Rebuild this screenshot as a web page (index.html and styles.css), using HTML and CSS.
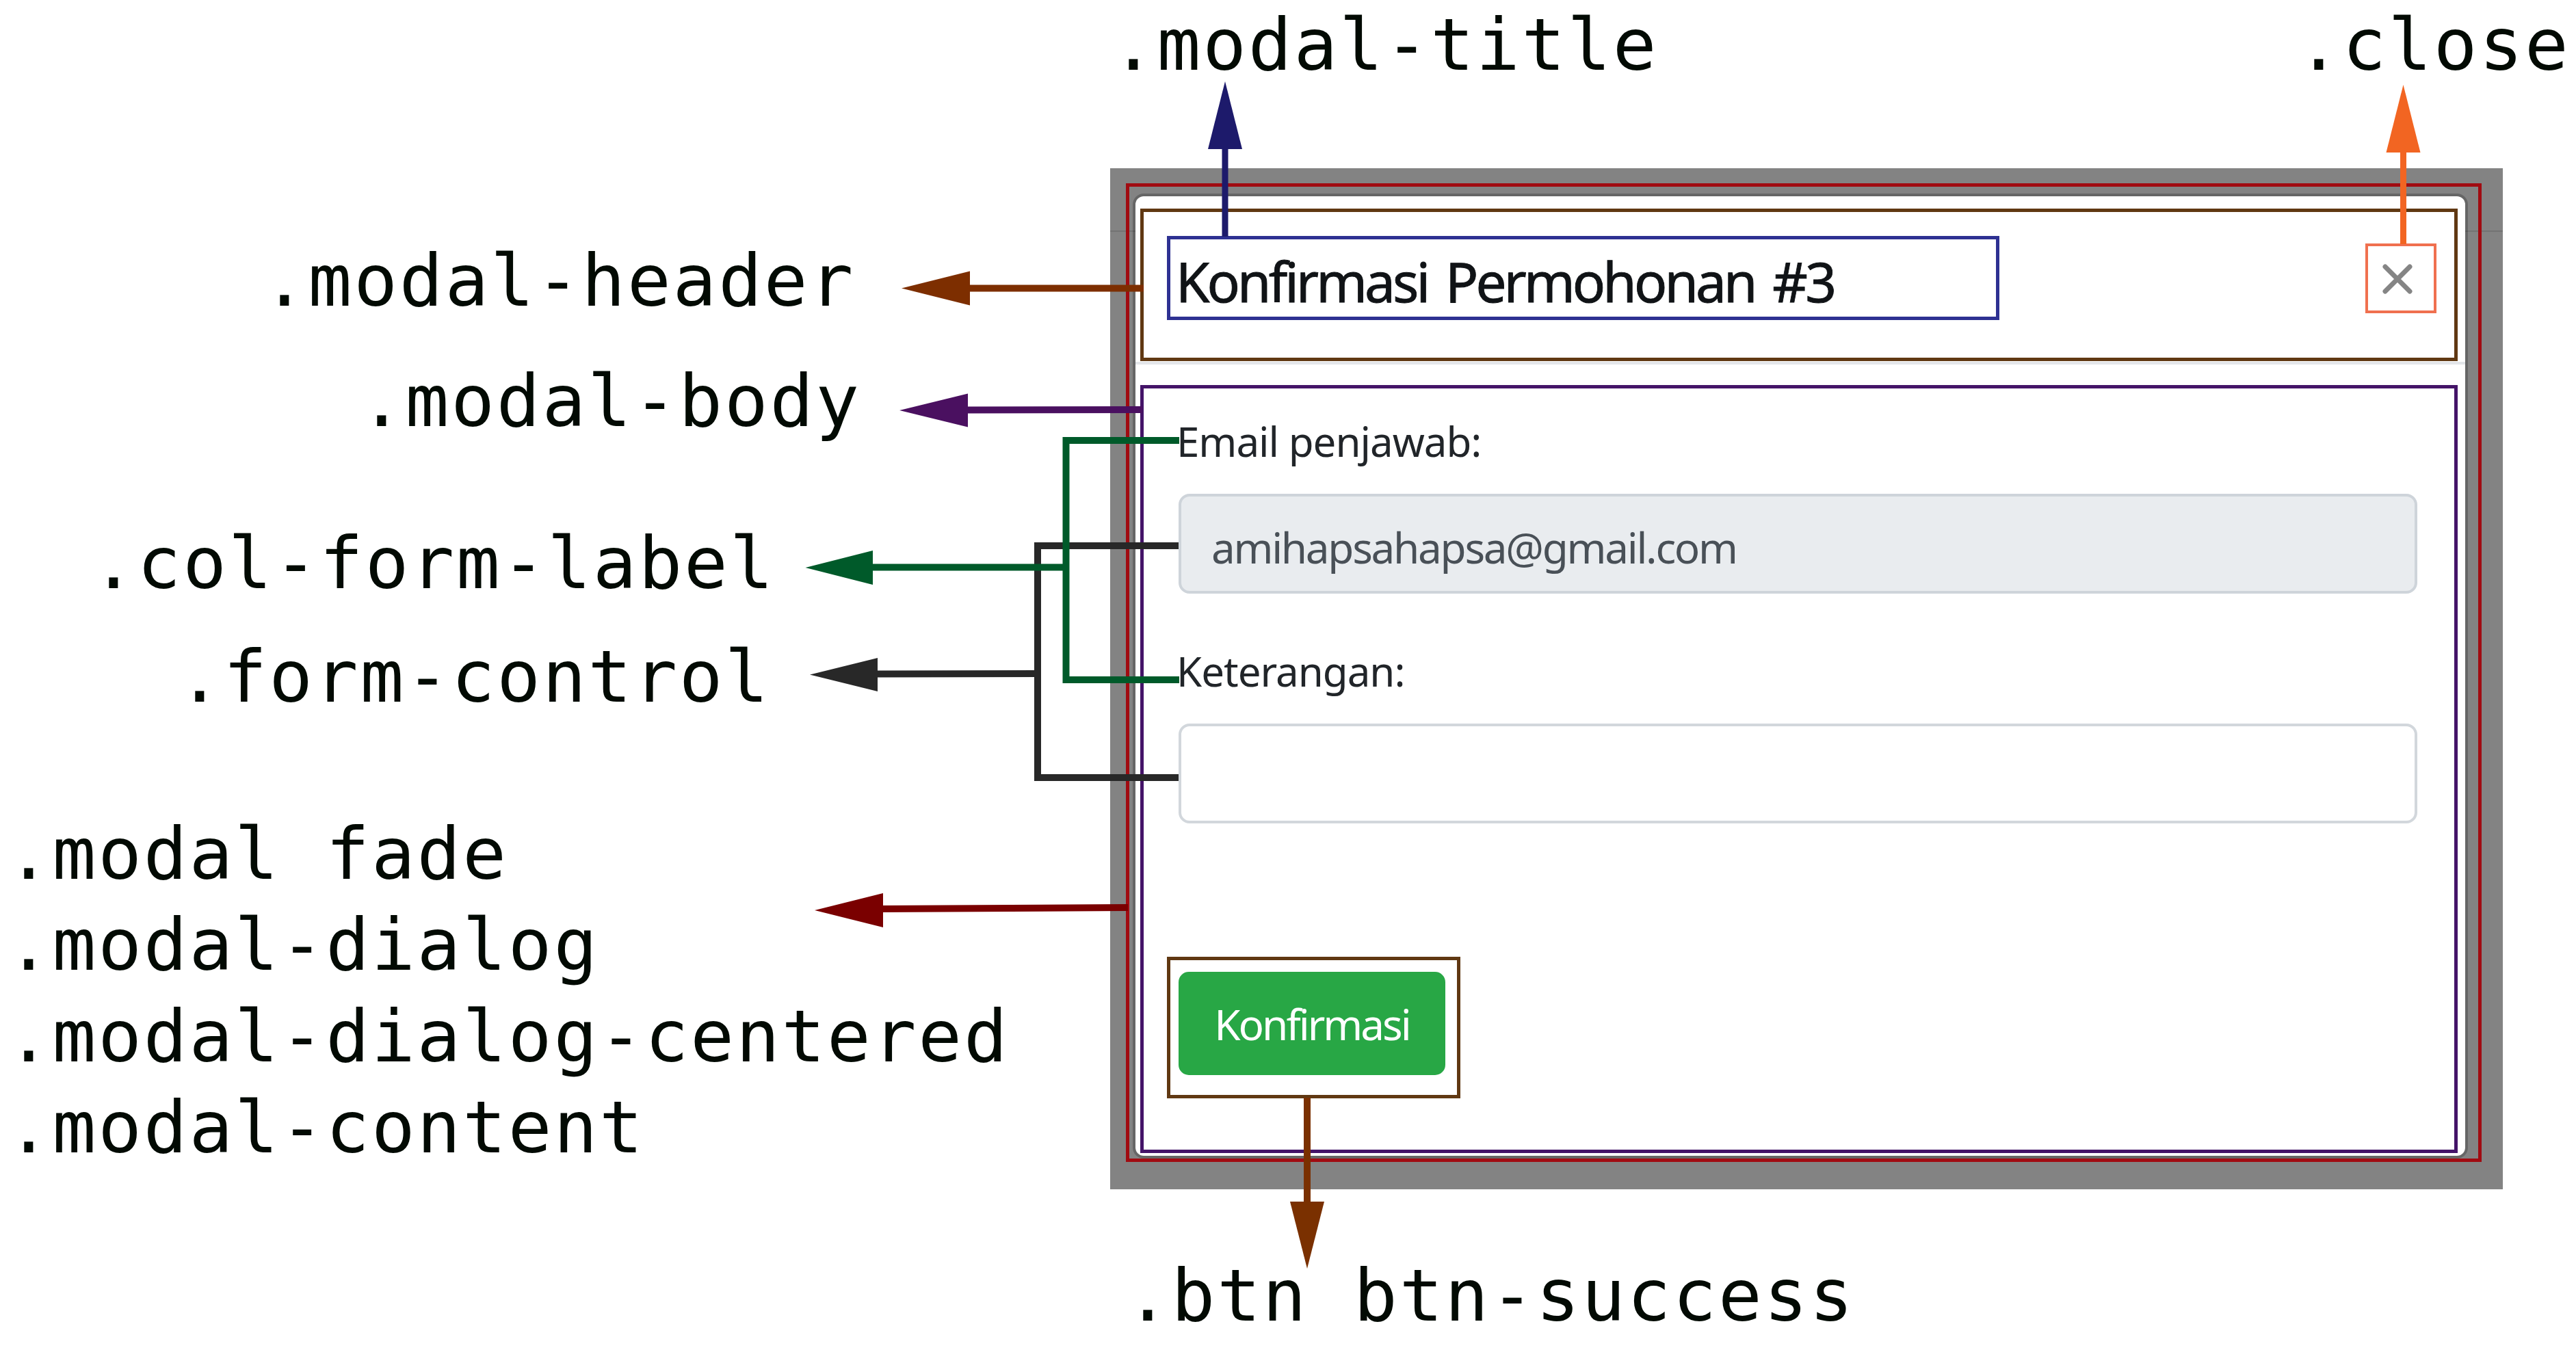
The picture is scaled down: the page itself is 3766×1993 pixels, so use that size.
FILE: index.html
```html
<!DOCTYPE html>
<html lang="id">
<head>
<meta charset="utf-8">
<title>Bootstrap modal anatomy</title>
<link rel="stylesheet" href="styles.css">
</head>
<body>
<main class="canvas">
  <section class="shot">
    <div class="modal-dialog">
      <div class="modal-content">
        <div class="modal-header">
          <div class="hl hl-header">
            <div class="hl hl-title"><h5 class="modal-title">Konfirmasi Permohonan #3</h5></div>
            <button class="hl hl-close close" type="button" aria-label="Close">
              <svg class="x-icon" width="44" height="44" viewBox="0 0 44 44"><path d="M4 4 L40 40 M40 4 L4 40" stroke="#858585" stroke-width="7" stroke-linecap="round" fill="none"/></svg>
            </button>
          </div>
        </div>
        <div class="modal-body">
          <div class="hl hl-body">
            <label class="col-form-label lbl-mail">Email penjawab:</label>
            <input class="form-control" type="text" readonly value="amihapsahapsa@gmail.com">
            <label class="col-form-label lbl-ket">Keterangan:</label>
            <input class="form-control" type="text">
            <div class="hl hl-btn"><button class="btn btn-success" type="button">Konfirmasi</button></div>
          </div>
        </div>
      </div>
    </div>
  </section>

  <svg class="arrows" width="3766" height="1993" viewBox="0 0 3766 1993">
    <!-- modal-title -->
    <line x1="1791" y1="346" x2="1791" y2="214" stroke="#1d1a6b" stroke-width="9"/>
    <polygon points="1791,119 1766,218 1816,218" fill="#1d1a6b"/>
    <!-- close -->
    <line x1="3513.5" y1="357" x2="3513.5" y2="219" stroke="#f26522" stroke-width="9"/>
    <polygon points="3513.5,124 3488.5,223 3538.5,223" fill="#f26522"/>
    <!-- modal-header -->
    <line x1="1672" y1="421.5" x2="1414" y2="421.5" stroke="#7d2e00" stroke-width="10"/>
    <polygon points="1318,421.5 1418,396.5 1418,446.5" fill="#7d2e00"/>
    <!-- modal-body -->
    <line x1="1670" y1="599" x2="1411" y2="599.5" stroke="#4a1060" stroke-width="10"/>
    <polygon points="1315,600 1415,575.5 1415,624.5" fill="#4a1060"/>
    <!-- form-control -->
    <polyline points="1723,798 1517,798 1517,1137 1723,1137" fill="none" stroke="#282828" stroke-width="10" stroke-linejoin="miter"/>
    <line x1="1517" y1="985" x2="1279" y2="985.5" stroke="#282828" stroke-width="10"/>
    <polygon points="1184,986.5 1283,962 1283,1011" fill="#282828"/>
    <!-- col-form-label -->
    <polyline points="1724,644 1558.5,644 1558.5,994 1724,994" fill="none" stroke="#005a2a" stroke-width="10" stroke-linejoin="miter"/>
    <line x1="1558.5" y1="829.5" x2="1272" y2="829.5" stroke="#005a2a" stroke-width="10"/>
    <polygon points="1177.5,830 1276,805 1276,855" fill="#005a2a"/>
    <!-- modal fade / dialog / content -->
    <line x1="1649" y1="1327" x2="1287" y2="1329" stroke="#7a0000" stroke-width="10"/>
    <polygon points="1191,1331 1291,1306 1291,1356" fill="#7a0000"/>
    <!-- btn -->
    <line x1="1911" y1="1605" x2="1911" y2="1761" stroke="#7a3000" stroke-width="10"/>
    <polygon points="1911,1855 1886,1757 1936,1757" fill="#7a3000"/>
  </svg>

  <p class="tag tag-title">.modal-title</p>
  <p class="tag tag-close">.close</p>
  <p class="tag tag-header">.modal-header</p>
  <p class="tag tag-body">.modal-body</p>
  <p class="tag tag-label">.col-form-label</p>
  <p class="tag tag-control">.form-control</p>
  <p class="tag tag-modal">.modal fade
.modal-dialog
.modal-dialog-centered
.modal-content</p>
  <p class="tag tag-btn">.btn btn-success</p>
</main>
</body>
</html>
```

FILE: styles.css
```css
html, body {
  margin: 0;
  padding: 0;
  background: #ffffff;
}

.canvas {
  position: relative;
  width: 3766px;
  height: 1993px;
  overflow: hidden;
  background: #ffffff;
}

/* ---------- screenshot frame ---------- */
.shot {
  position: absolute;
  left: 1623px;
  top: 246px;
  width: 2036px;
  height: 1493px;
  box-sizing: border-box;
  padding: 22px 31px 40px 23px;
  background: linear-gradient(#737373, #737373) 0 91px / 100% 2px no-repeat, #838383;
}

.modal-dialog {
  box-sizing: border-box;
  width: 1982px;
  height: 1431px;
  border: 5px solid #a10b11;
}

.modal-content {
  box-sizing: border-box;
  height: 1411px;
  margin: 10px 15px 0 5px;
  border: 4px solid rgba(0, 0, 0, 0.22);
  border-radius: 16px;
  background: #ffffff;
  background-clip: padding-box;
  font-family: "Noto Sans", "Open Sans", sans-serif;
}

.modal-header {
  padding: 18px 11px 1px 7px;
  border-bottom: 4px solid #e3e6ea;
}

.hl-header {
  box-sizing: border-box;
  height: 223px;
  border: 5px solid #603812;
  display: flex;
  align-items: center;
  justify-content: space-between;
  padding: 0 26px 20px 34px;
}

.hl-title {
  box-sizing: border-box;
  width: 1217px;
  height: 123px;
  border: 5px solid #2e3192;
  padding: 8px 0 0 8px;
}

.modal-title {
  margin: 0;
  font-family: "Noto Sans", "Open Sans", sans-serif;
  font-size: 80px;
  line-height: 105px;
  font-weight: 400;
  letter-spacing: -3.9px;
  word-spacing: 9px;
  color: #101316;
  -webkit-text-stroke: 0.9px #101316;
  white-space: nowrap;
}

.hl-close {
  box-sizing: border-box;
  width: 104px;
  height: 102px;
  border: 4px solid #f0704f;
  background: transparent;
  padding: 2px 10px 0 0;
  margin: 0;
  display: flex;
  align-items: center;
  justify-content: center;
}

.x-icon {
  display: block;
}

.modal-body {
  padding: 30px 11px 4px 7px;
}

.hl-body {
  box-sizing: border-box;
  height: 1123px;
  border: 5px solid #441468;
  padding: 37px 54px 0 51px;
  display: flex;
  flex-direction: column;
  align-items: stretch;
}

.col-form-label {
  display: block;
  margin-left: -3px;
  font-size: 60px;
  line-height: 80px;
  letter-spacing: -1px;
  color: #212529;
}

.lbl-mail {
  margin-bottom: 37px;
}

.lbl-ket {
  margin-top: 73px;
  margin-bottom: 37px;
}

.form-control {
  box-sizing: border-box;
  display: block;
  width: 100%;
  height: 146px;
  margin: 0;
  padding: 10px 44px 0 44px;
  border: 4px solid #d2d7dc;
  border-radius: 16px;
  background: #ffffff;
  font-family: "Noto Sans", "Open Sans", sans-serif;
  font-size: 62px;
  letter-spacing: -2.3px;
  color: #495057;
  outline: none;
}

.form-control[readonly] {
  background: #e9ecef;
  border-color: #ced4da;
}

.hl-btn {
  align-self: flex-start;
  margin-top: 195px;
  margin-left: -17px;
  border: 5px solid #603812;
  padding: 17px 17px 29px 12px;
}

.btn-success {
  display: block;
  width: 390px;
  height: 151px;
  margin: 0;
  padding: 0;
  border: 0;
  border-radius: 15px;
  background: #28a745;
  color: #ffffff;
  font-family: "Noto Sans", "Open Sans", sans-serif;
  font-size: 62px;
  letter-spacing: -3px;
}

/* ---------- annotations ---------- */
.arrows {
  position: absolute;
  left: 0;
  top: 0;
  pointer-events: none;
}

.tag {
  position: absolute;
  margin: 0;
  font-family: "DejaVu Sans Mono", "Liberation Mono", monospace;
  font-size: 106px;
  line-height: 106px;
  letter-spacing: 2.8px;
  color: #020a03;
  white-space: pre;
}

.tag-title   { left: 1625px; top: 13px; }
.tag-close   { left: 3358px; top: 13px; }
.tag-header  { left: 384px;  top: 358px; }
.tag-body    { left: 526px;  top: 534px; }
.tag-label   { left: 134px;  top: 771px; }
.tag-control { left: 260px;  top: 937px; }
.tag-btn     { left: 1646px; top: 1842px; }

.tag-modal {
  left: 10px;
  top: 1182px;
  line-height: 133.33px;
}
```
